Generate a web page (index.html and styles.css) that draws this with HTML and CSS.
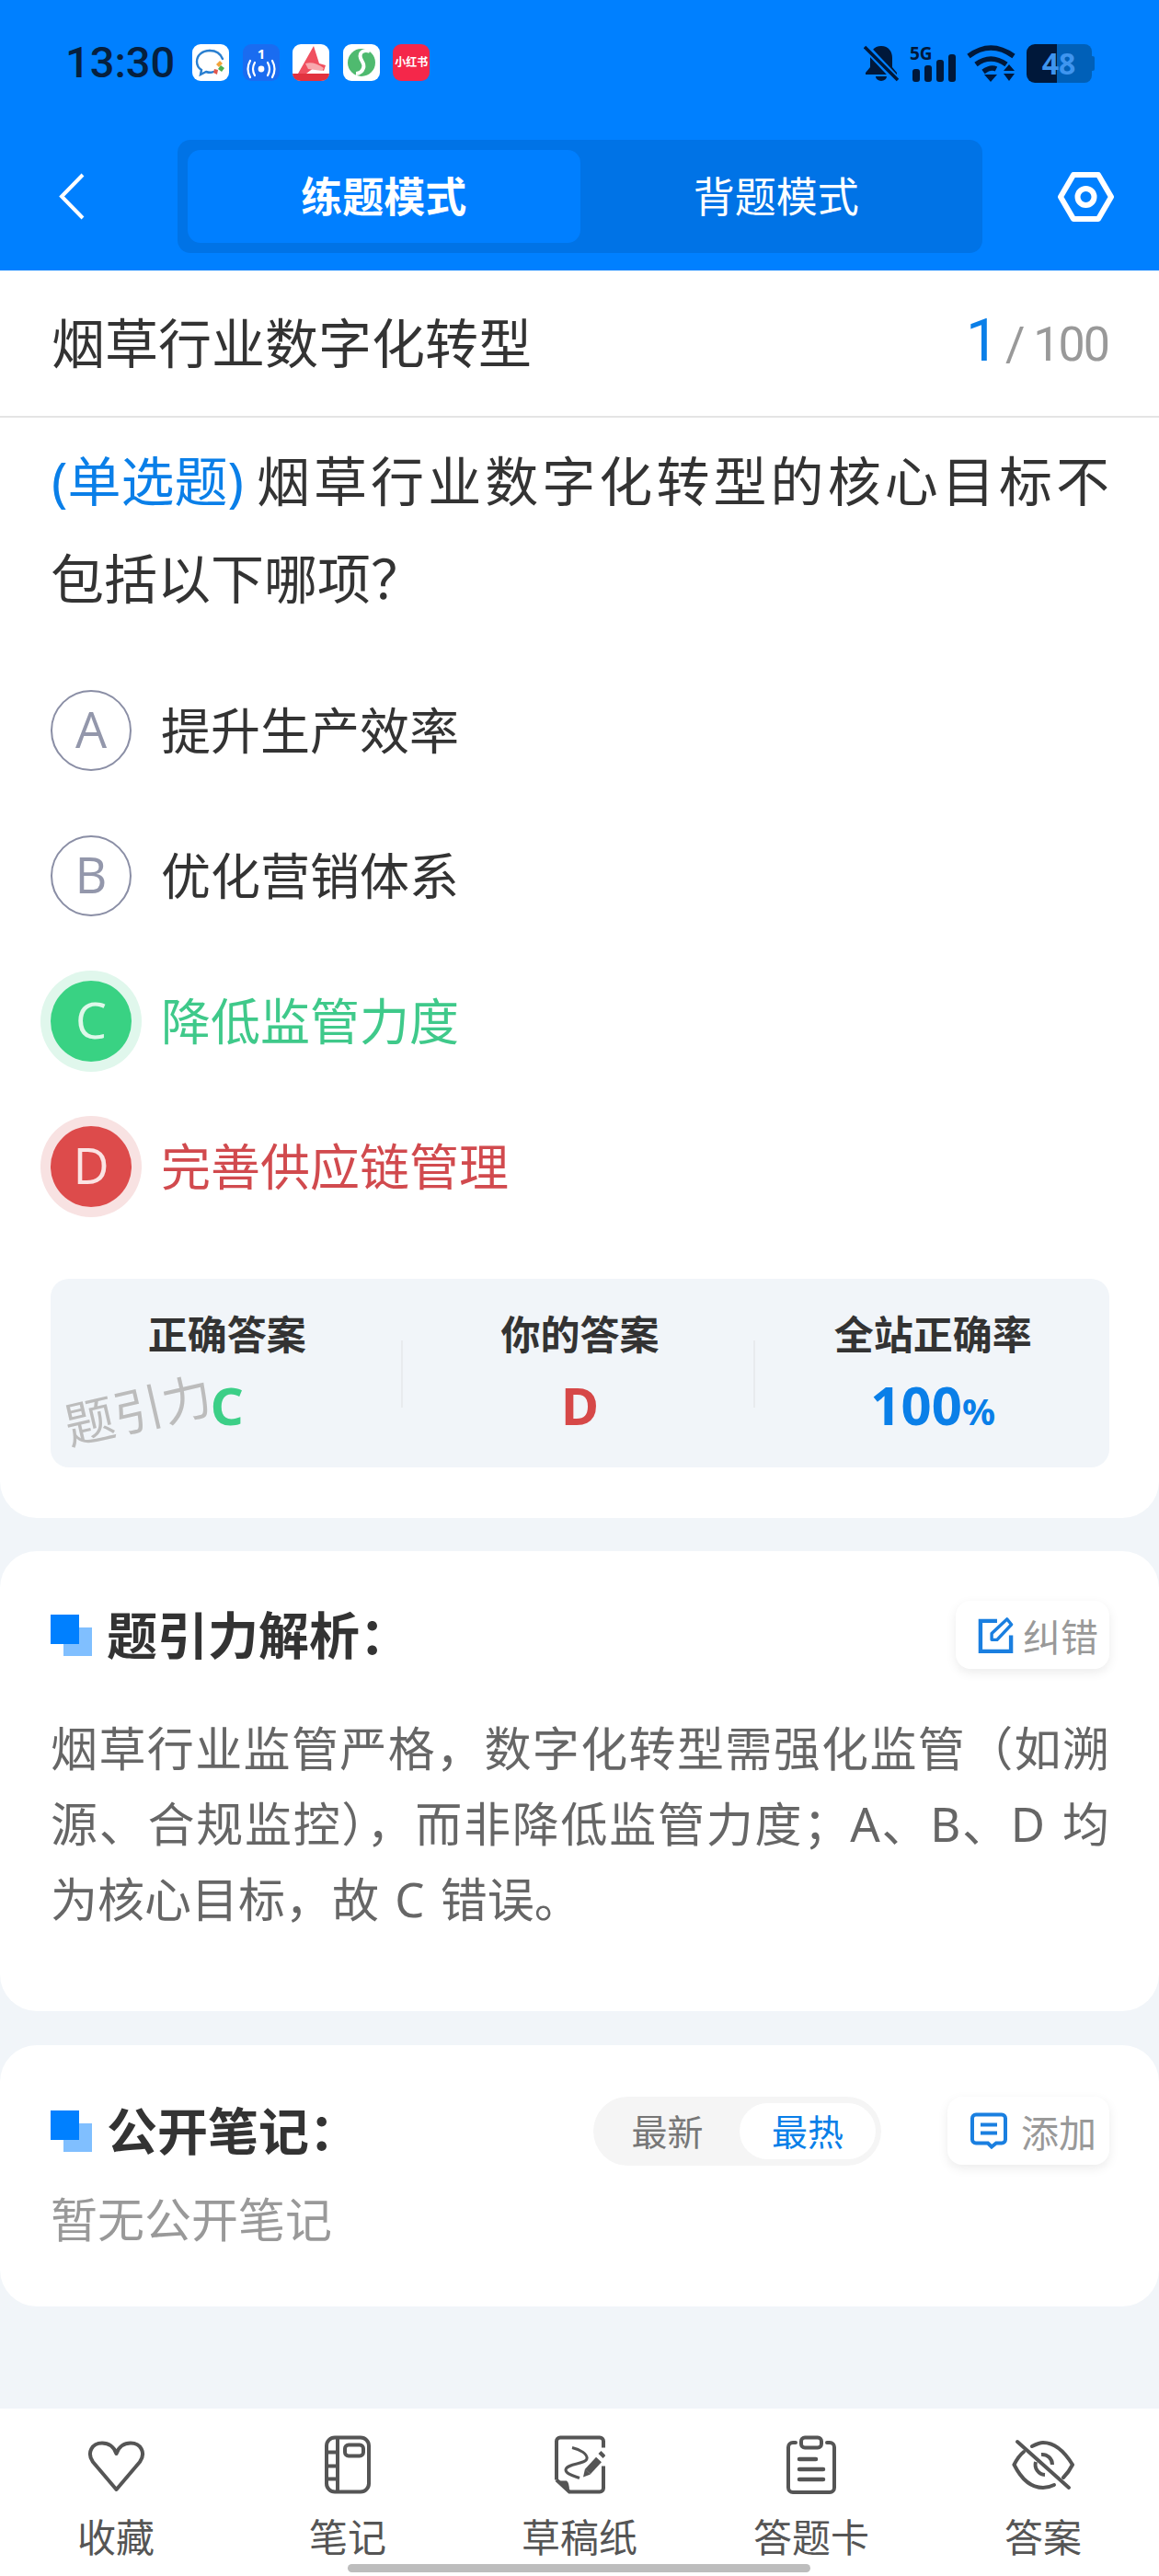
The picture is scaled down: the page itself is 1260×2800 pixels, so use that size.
FILE: index.html
```html
<!DOCTYPE html>
<html lang="zh-CN">
<head>
    <meta charset="UTF-8">
    <meta name="viewport" content="width=device-width, initial-scale=1.0">
    <title>烟草行业数字化转型</title>
    <link rel="stylesheet" href="styles.css">
</head>
<body>
<div class="app">
    <header class="header">
        <div class="status">
            <span class="time">13:30</span>
            <div class="app-icons">
                <svg class="app-icon" viewBox="0 0 40 40">
                    <rect width="40" height="40" rx="9" fill="#fff"/>
                    <path d="M19 7c-8 0-14 5-14 12 0 4 2 7 5 9l-1 5 6-3c3 1 6 1 8 0" fill="none" stroke="#2a7fd0" stroke-width="2.4" stroke-linecap="round"/>
                    <path d="M19 7c7 0 12 4 14 9" fill="none" stroke="#2a7fd0" stroke-width="2.4" stroke-linecap="round"/>
                    <path d="M26 22l4-4 3 3-4 4z" fill="#f2a33a"/>
                    <path d="M31 23l4 3-3 4-4-3z" fill="#4caf50"/>
                    <path d="M24 27l4 1-1 5-4-2z" fill="#e2574c"/>
                </svg>
                <svg class="app-icon" viewBox="0 0 40 40">
                    <rect width="40" height="40" rx="9" fill="#1a6cf0"/>
                    <text x="20" y="16" class="hot-num">1</text>
                    <circle cx="20" cy="27" r="3.4" fill="#fff"/>
                    <path d="M13 20q-4 7 0 14M8 18q-5 9 0 18M27 20q4 7 0 14M32 18q5 9 0 18" fill="none" stroke="#fff" stroke-width="2.2" stroke-linecap="round"/>
                </svg>
                <svg class="app-icon" viewBox="0 0 40 40">
                    <rect width="40" height="40" rx="9" fill="#fff"/>
                    <path d="M23 2l6 19 7 2-2 6-10-4-9 7H6z" fill="#f0505f"/>
                    <path d="M14 21q9-3 20 5l-2 3-15-2z" fill="#f8a9ae"/>
                    <path d="M0 32h40a9 8 0 0 1-9 8H9a9 8 0 0 1-9-8z" fill="#e2323f"/>
                </svg>
                <svg class="app-icon" viewBox="0 0 40 40">
                    <rect width="40" height="40" rx="9" fill="#fff"/>
                    <circle cx="20" cy="20" r="15" fill="#4fba6f"/>
                    <path d="M29 8c-6-3-12 1-10 7 1 4 5 6 3 11-1 3-4 6-8 6" fill="none" stroke="#fff" stroke-width="4"/>
                </svg>
                <div class="xhs">小红书</div>
            </div>
            <div class="status-right">
                <svg class="st-bell" viewBox="0 0 38 41">
                    <path d="M19 2c-8 0-12 6-12 13v10l-5 6v2h34v-2l-5-6V15C31 8 27 2 19 2z" fill="#00183a"/>
                    <path d="M13 35a6 5 0 0 0 12 0z" fill="#00183a"/>
                    <path d="M2 3l34 36" stroke="#0080ff" stroke-width="8"/>
                    <path d="M1 3l36 36" stroke="#00183a" stroke-width="3.6"/>
                </svg>
                <svg class="st-signal" viewBox="0 0 50 41">
                    <text x="0" y="17" class="st-5g">5G</text>
                    <rect x="3" y="27" width="8" height="14" rx="3" fill="#00183a"/>
                    <rect x="16" y="23" width="8" height="18" rx="3" fill="#00183a"/>
                    <rect x="29" y="17" width="8" height="24" rx="3" fill="#00183a"/>
                    <rect x="42" y="11" width="8" height="30" rx="3" fill="#00183a"/>
                </svg>
                <svg class="st-wifi" viewBox="0 0 53 41">
                    <path d="M2 13q24-18 49 0M10 22q16-12 33 0M18 30q8-6 14-3" fill="none" stroke="#00183a" stroke-width="5.5"/>
                    <path d="M19 33h14l-7 8z" fill="#00183a"/>
                    <path d="M40 29h12l-6-7zM40 32h12l-6 8z" fill="#00183a"/>
                </svg>
                <svg class="st-battery" viewBox="0 0 74 42">
                    <path d="M33 0h30a8 8 0 0 1 8 8v26a8 8 0 0 1-8 8H33z" fill="#0060b8"/>
                    <path d="M71 13h1a2 2 0 0 1 2 2v12a2 2 0 0 1-2 2h-1z" fill="#0060b8"/>
                    <path d="M33 0H9a9 9 0 0 0-9 9v24a9 9 0 0 0 9 9h24z" fill="#00183a"/>
                    <text x="35" y="33" class="st-level">48</text>
                </svg>
            </div>
        </div>
        <nav class="nav">
            <svg class="back" viewBox="0 0 28 51"><path d="M26 2L3 25.5 26 49" fill="none" stroke="#fff" stroke-width="4"/></svg>
            <div class="mode">
                <div class="mode-item active">练题模式</div>
                <div class="mode-item">背题模式</div>
            </div>
            <svg class="gear" viewBox="0 0 61 54">
                <path d="M17 3h27l14 24-14 24H17L3 27z" fill="none" stroke="#fff" stroke-width="6" stroke-linejoin="round"/>
                <circle cx="30.5" cy="27" r="9" fill="none" stroke="#fff" stroke-width="6"/>
            </svg>
        </nav>
    </header>

    <div class="title-row">
        <h1>烟草行业数字化转型</h1>
        <div class="count"><span class="count-now">1</span><span class="count-total">/ 100</span></div>
    </div>

    <section class="card question">
        <div class="q-text">
            <p class="q-line"><span class="q-type">(单选题)</span>烟草行业数字化转型的核心目标不</p>
            <p>包括以下哪项&#65311;</p>
        </div>

        <div class="options">
            <div class="option"><span class="badge">A</span><span class="opt-text">提升生产效率</span></div>
            <div class="option"><span class="badge">B</span><span class="opt-text">优化营销体系</span></div>
            <div class="option right"><span class="badge">C</span><span class="opt-text">降低监管力度</span></div>
            <div class="option wrong"><span class="badge">D</span><span class="opt-text">完善供应链管理</span></div>
        </div>

        <div class="stats">
            <div class="stat">
                <div class="stat-label">正确答案</div>
                <div class="stat-value green">C</div>
            </div>
            <div class="stat">
                <div class="stat-label">你的答案</div>
                <div class="stat-value red">D</div>
            </div>
            <div class="stat">
                <div class="stat-label">全站正确率</div>
                <div class="stat-value blue">100<small>%</small></div>
            </div>
            <div class="watermark">题引力</div>
        </div>
    </section>

    <section class="card analysis">
        <div class="card-head">
            <i class="mark"></i>
            <h2>题引力解析&#65306;</h2>
            <div class="tool-btn edit">
                <svg class="tool-icon" viewBox="0 0 40 41">
                    <path d="M21 5H2.500v34h34V21" fill="none" stroke="#1a7fe0" stroke-width="4.500"/>
                    <path d="M15 26v-7L32 3l5 6-16 17z" fill="none" stroke="#1a7fe0" stroke-width="3.500" stroke-linejoin="round"/>
                </svg>
                纠错
            </div>
        </div>
        <div class="analysis-text">
            <p class="fill">烟草行业监管严格&#65292;数字化转型需强化监管&#65288;如溯</p>
            <p class="fill">源、合规监控&#65289;&#65292;而非降低监管力度&#65307;A、B、D 均</p>
            <p>为核心目标&#65292;故 C 错误。</p>
        </div>
    </section>

    <section class="card notes">
        <div class="card-head">
            <i class="mark"></i>
            <h2>公开笔记&#65306;</h2>
            <div class="sort">
                <span class="sort-item">最新</span>
                <span class="sort-item on">最热</span>
            </div>
            <div class="tool-btn add">
                <svg class="tool-icon" viewBox="0 0 40 39">
                    <path d="M6 2h28a4 4 0 0 1 4 4v23a4 4 0 0 1-4 4h-6l-5 4-4-4H6a4 4 0 0 1-4-4V6a4 4 0 0 1 4-4z" fill="none" stroke="#1a7fe0" stroke-width="4"/>
                    <path d="M11 13h18M11 22h18" stroke="#1a7fe0" stroke-width="4"/>
                </svg>
                添加
            </div>
        </div>
        <p class="empty">暂无公开笔记</p>
    </section>

    <footer class="tabbar">
        <div class="tab">
            <svg class="tab-icon" width="63" height="56" viewBox="0 -2 63 56">
                <path d="M31.500 53L6 23C-1 13 5 2.500 16 2.500c7 0 13 4 15.500 11.500C34 6.500 40 2.500 47 2.500 58 2.500 64 13 57 23z" fill="none" stroke="#555" stroke-width="4" stroke-linejoin="round"/>
            </svg>
            <span>收藏</span>
        </div>
        <div class="tab">
            <svg class="tab-icon" width="50" height="63" viewBox="0 0 50 63">
                <rect x="2" y="2" width="46" height="59" rx="9" fill="none" stroke="#555" stroke-width="4"/>
                <path d="M14 2v59M2 18h12M2 33h12M2 47h12" fill="none" stroke="#555" stroke-width="4"/>
                <rect x="22" y="10" width="20" height="12" rx="4" fill="none" stroke="#555" stroke-width="4"/>
            </svg>
            <span>笔记</span>
        </div>
        <div class="tab">
            <svg class="tab-icon" width="55" height="63" viewBox="0 0 55 63">
                <path d="M2 48V6a4 4 0 0 1 4-4h43a4 4 0 0 1 4 4v7M53 33v24a4 4 0 0 1-4 4H16L2 48" fill="none" stroke="#555" stroke-width="4"/>
                <path d="M3 49h10q3 2 3 11z" fill="#555"/>
                <path d="M19 13c9 2 17 7 16 12-1 6-22 5-23 12 0 5 10 7 15 9" fill="none" stroke="#555" stroke-width="3"/>
                <path d="M36 39l12-13" stroke="#555" stroke-width="8"/>
                <path d="M33 36l6 6-8 3z" fill="#555"/>
                <path d="M50 22l3-3" stroke="#555" stroke-width="7"/>
            </svg>
            <span>草稿纸</span>
        </div>
        <div class="tab">
            <svg class="tab-icon" width="54" height="64" viewBox="0 0 54 64">
                <path d="M10 8H7a5 5 0 0 0-5 5v44a5 5 0 0 0 5 5h40a5 5 0 0 0 5-5V13a5 5 0 0 0-5-5h-3" fill="none" stroke="#555" stroke-width="4" stroke-linecap="round"/>
                <rect x="16" y="2.500" width="22" height="11" rx="4" fill="none" stroke="#555" stroke-width="4"/>
                <path d="M14 26h18M14 37h26M14 48h26" stroke="#555" stroke-width="4.500" stroke-linecap="round"/>
            </svg>
            <span>答题卡</span>
        </div>
        <div class="tab">
            <svg class="tab-icon" width="68" height="54" viewBox="0 0 68 54">
                <path d="M13 13C8 17 5 22 2.500 27 10 42 20 52 34 52c4 0 8-1 12-3" fill="none" stroke="#555" stroke-width="4" stroke-linecap="round"/>
                <path d="M22 7c4-2 8-4 12-4 14 0 24 11 32 24-3 6-6 10-10 14" fill="none" stroke="#555" stroke-width="4" stroke-linecap="round"/>
                <path d="M6 2l56 50" stroke="#555" stroke-width="4" stroke-linecap="round"/>
                <path d="M26 24a11 11 0 0 0 10 14M32 16a11 11 0 0 1 12 11" fill="none" stroke="#555" stroke-width="4"/>
            </svg>
            <span>答案</span>
        </div>
        <div class="home-bar"></div>
    </footer>
</div>
</body>
</html>
```

FILE: styles.css
```css
* {
    box-sizing: border-box;
}
body {
    margin: 0;
    padding: 0;
    font-family: "Noto Sans", "Noto Sans CJK SC", sans-serif;
    background: #f1f5f9;
    color: #333;
}
p, h1, h2 {
    margin: 0;
}
.app {
    width: 1260px;
    height: 2800px;
    display: flex;
    flex-direction: column;
}

/* header */
.header {
    height: 294px;
    background: #0080ff;
}
.status {
    height: 152px;
    padding: 48px 70px 0 71px;
    display: flex;
    align-items: flex-start;
}
.time {
    font-family: Roboto, sans-serif;
    font-size: 47px;
    font-weight: 500;
    line-height: 40px;
    color: #06203e;
}
.app-icons {
    display: flex;
    gap: 14.500px;
    margin-left: 19px;
}
.app-icon, .xhs {
    width: 40px;
    height: 40px;
}
.xhs {
    border-radius: 9px;
    background: #f5274a;
    color: #fff;
    font-size: 12px;
    font-weight: 700;
    line-height: 40px;
    text-align: center;
}
.hot-num {
    font-size: 15px;
    font-weight: 700;
    fill: #fff;
    text-anchor: middle;
}
.status-right {
    margin-left: auto;
    display: flex;
    align-items: flex-start;
    gap: 12px;
}
.st-bell {
    width: 38px;
    height: 41px;
}
.st-signal {
    width: 50px;
    height: 41px;
}
.st-wifi {
    width: 53px;
    height: 41px;
}
.st-battery {
    width: 74px;
    height: 42px;
}
.st-5g {
    font-size: 19px;
    font-weight: 700;
    fill: #00183a;
}
.st-level {
    font-size: 32px;
    font-weight: 700;
    fill: #3f95ef;
    text-anchor: middle;
}
.nav {
    display: flex;
    align-items: center;
    height: 123px;
    padding-left: 64px;
}
.back {
    width: 28px;
    height: 51px;
    margin-right: 101px;
}
.mode {
    width: 875px;
    height: 123px;
    padding: 11px;
    border-radius: 14px;
    background: #0073e6;
    display: flex;
}
.mode-item {
    flex: 1;
    border-radius: 14px;
    color: #fff;
    font-size: 45px;
    line-height: 101px;
    text-align: center;
}
.mode-item.active {
    background: #007fff;
    font-weight: 700;
}
.gear {
    width: 61px;
    height: 54px;
    margin-left: 82px;
}

/* title */
.title-row {
    height: 160px;
    padding: 0 55px 6px 56px;
    background: #fff;
    border-bottom: 2px solid #e4e4e4;
    display: flex;
    align-items: center;
    justify-content: space-between;
}
h1 {
    font-size: 58px;
    font-weight: 400;
}
.count {
    display: flex;
    align-items: baseline;
}
.count-now {
    font-family: Roboto, sans-serif;
    font-size: 64px;
    color: #0a7fe8;
    margin-right: 7px;
}
.count-total {
    font-family: Roboto, sans-serif;
    font-size: 52px;
    color: #999;
    letter-spacing: -2px;
}

/* cards */
.card {
    background: #fff;
}
.question {
    height: 1196px;
    padding: 16px 54px 0 55px;
    border-radius: 0 0 40px 40px;
}
.q-text {
    font-size: 58px;
    line-height: 106px;
}
.q-line {
    text-align: justify;
    text-align-last: justify;
}
.q-type {
    display: inline-block;
    margin-left: 1px;
    margin-right: 10px;
    color: #0a7fe8;
}
.options {
    margin-top: 33px;
}
.option {
    height: 158px;
    display: flex;
    align-items: center;
    font-size: 54px;
}
.opt-text {
    margin-bottom: 5px;
}
.badge {
    width: 88px;
    height: 88px;
    margin-right: 32px;
    border: 2.500px solid #8a8ea5;
    border-radius: 50%;
    color: #9397ab;
    font-family: "Open Sans", sans-serif;
    font-size: 54px;
    font-weight: 400;
    line-height: 80px;
    text-align: center;
}
.option.right {
    color: #3fc98a;
}
.option.wrong {
    color: #d14a4e;
}
.right .badge, .wrong .badge {
    border: none;
    line-height: 85px;
}
.right .badge {
    background: #39d283;
    color: #dff8ea;
    box-shadow: 0 0 0 11px #e0f7ec;
}
.wrong .badge {
    background: #dd4b4b;
    color: #fbe4e4;
    box-shadow: 0 0 0 11px #f8e2e2;
}
.stats {
    position: relative;
    height: 205px;
    margin-top: 43px;
    border-radius: 20px;
    background: #f1f5f9;
    display: grid;
    grid-template-columns: repeat(3, 1fr);
}
.stat {
    padding-top: 31px;
    text-align: center;
    background: linear-gradient(#e8ebee, #e8ebee) right 1px top 67px / 2px 73px no-repeat;
}
.stat:nth-child(3) {
    background: none;
}
.stat-label {
    font-size: 43px;
    font-weight: 700;
    line-height: 60px;
}
.stat-value {
    margin-top: 16px;
    font-size: 56px;
    font-weight: 700;
    line-height: 60px;
}
.stat-value.blue {
    font-size: 58px;
}
.stat-value small {
    font-size: 40px;
}
.green {
    color: #3ccf87;
}
.red {
    color: #d64848;
}
.blue {
    color: #0a7fe8;
}
.watermark {
    position: absolute;
    left: 14px;
    top: 112px;
    font-size: 54px;
    line-height: 60px;
    color: #bcbcbc;
    transform: rotate(-13deg);
}
.card-head {
    display: flex;
    align-items: center;
    height: 74px;
}
.mark {
    width: 45px;
    height: 45px;
    background:
        linear-gradient(#0080ff, #0080ff) 0 0 / 31px 32px no-repeat,
        linear-gradient(#80bfff, #80bfff) 14px 14px / 31px 31px no-repeat;
}
h2 {
    margin-left: 16px;
    font-size: 55px;
    line-height: 74px;
    font-weight: 700;
}
.tool-btn {
    height: 74px;
    margin-left: auto;
    border-radius: 16px;
    background: #fff;
    box-shadow: 0 4px 12px rgba(0, 0, 0, 0.08);
    color: #999;
    font-size: 41px;
    display: flex;
    align-items: center;
}
.tool-icon {
    width: 40px;
    height: 40px;
}
.tool-btn.edit {
    width: 167px;
    padding-left: 24px;
    gap: 9px;
}
.tool-btn.add {
    width: 176px;
    margin-left: 72px;
    padding-left: 25px;
    gap: 15px;
}
.analysis {
    height: 500px;
    margin-top: 36px;
    padding: 54px 54px 0 55px;
    border-radius: 40px;
}
.analysis-text {
    margin-top: 45px;
    font-size: 51px;
    line-height: 82px;
    word-spacing: 4px;
    color: #666;
}
.fill {
    text-align: justify;
    text-align-last: justify;
}
.notes {
    height: 284px;
    margin-top: 37px;
    padding: 56px 54px 0 55px;
    border-radius: 40px;
}
.sort {
    width: 313px;
    height: 75px;
    margin-left: auto;
    padding: 7px 6px 7px 0;
    border-radius: 38px;
    background: #f5f5f5;
    display: flex;
    font-size: 39px;
    line-height: 61px;
    color: #777;
}
.sort-item {
    width: 159px;
    padding-left: 2px;
    text-align: center;
}
.sort-item.on {
    width: 148px;
    padding-left: 0;
    border-radius: 31px;
    background: #fff;
    color: #0a7fe8;
}
.empty {
    margin-top: 29px;
    font-size: 51px;
    line-height: 60px;
    color: #999;
}

/* bottom tabs */
.tabbar {
    position: relative;
    height: 182px;
    margin-top: auto;
    padding-top: 29px;
    background: #fff;
    display: flex;
}
.tab {
    flex: 1;
    display: flex;
    flex-direction: column;
    align-items: center;
    color: #555;
    font-size: 42px;
    line-height: 50px;
}
.tab-icon {
    height: 64px;
    margin-bottom: 22px;
}
.home-bar {
    position: absolute;
    left: 378px;
    bottom: 4px;
    width: 503px;
    height: 9px;
    border-radius: 5px;
    background: #bdbdbd;
}
```
